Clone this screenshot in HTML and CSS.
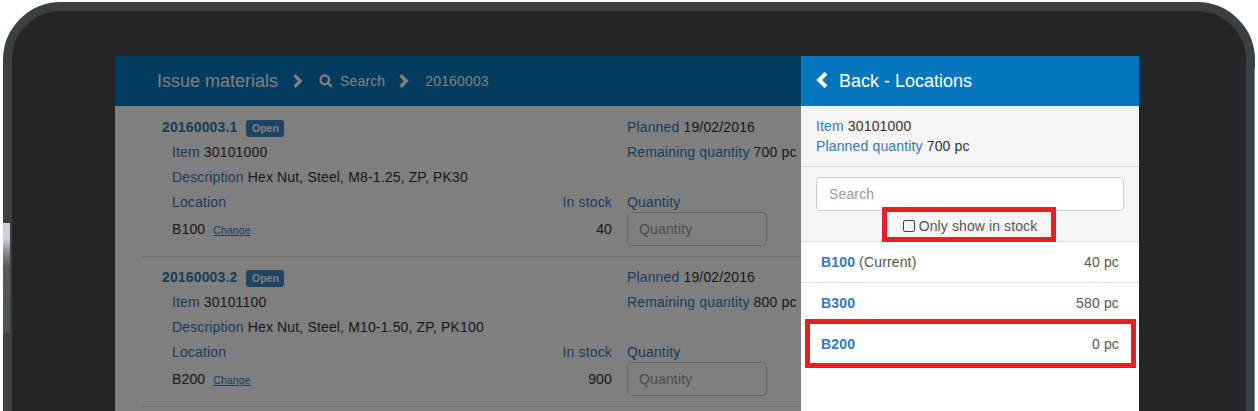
FILE: index.html
```html
<!DOCTYPE html>
<html lang="en">
<head>
<meta charset="utf-8">
<title>Issue materials</title>
<link rel="stylesheet" href="styles.css">
</head>
<body>
<div class="device">
  <span class="glare"></span>
  <span class="edge"></span>
  <div class="bezel">
    <div class="app">
      <main class="main">
        <header class="topbar">
          <span class="crumb-title">Issue materials</span>
          <svg class="chev" viewBox="0 0 10 14"><path d="M1.6 1.2 7.3 7l-5.7 5.8" /></svg>
          <svg class="mag" viewBox="0 0 14 14"><circle cx="5.8" cy="5.8" r="4.3"/><path d="M8.8 8.8 12.8 12.8"/></svg>
          <span class="crumb">Search</span>
          <svg class="chev" viewBox="0 0 10 14"><path d="M1.6 1.2 7.3 7l-5.7 5.8" /></svg>
          <span class="crumb">20160003</span>
        </header>
        <section class="record">
          <div class="col-left">
            <div class="line"><a class="order">20160003.1</a><span class="badge">Open</span></div>
            <div class="line indent"><span class="lbl">Item</span> 30101000</div>
            <div class="line indent"><span class="lbl">Description</span> Hex Nut, Steel, M8-1.25, ZP, PK30</div>
            <div class="line indent split"><span class="lbl">Location</span><span class="lbl">In stock</span></div>
            <div class="line indent split last"><span>B100<a class="change">Change</a></span><span>40</span></div>
          </div>
          <div class="col-right">
            <div class="line"><span class="lbl">Planned</span> 19/02/2016</div>
            <div class="line"><span class="lbl">Remaining quantity</span> 700 pc</div>
            <div class="line"></div>
            <div class="line short"><span class="lbl">Quantity</span></div>
            <input class="qty" placeholder="Quantity">
          </div>
        </section>
        <section class="record">
          <div class="col-left">
            <div class="line"><a class="order">20160003.2</a><span class="badge">Open</span></div>
            <div class="line indent"><span class="lbl">Item</span> 30101100</div>
            <div class="line indent"><span class="lbl">Description</span> Hex Nut, Steel, M10-1.50, ZP, PK100</div>
            <div class="line indent split"><span class="lbl">Location</span><span class="lbl">In stock</span></div>
            <div class="line indent split last"><span>B200<a class="change">Change</a></span><span>900</span></div>
          </div>
          <div class="col-right">
            <div class="line"><span class="lbl">Planned</span> 19/02/2016</div>
            <div class="line"><span class="lbl">Remaining quantity</span> 800 pc</div>
            <div class="line"></div>
            <div class="line short"><span class="lbl">Quantity</span></div>
            <input class="qty" placeholder="Quantity">
          </div>
        </section>
        <section class="record"></section>
        <div class="dim"></div>
      </main>
      <aside class="panel">
        <header class="panel-head">
          <svg class="back" viewBox="0 0 12 16"><path d="M10 1.3 3.2 8l6.8 6.7"/></svg>
          <span>Back - Locations</span>
        </header>
        <div class="info">
          <div><span class="lbl">Item</span> 30101000</div>
          <div><span class="lbl">Planned quantity</span> 700 pc</div>
        </div>
        <div class="filter">
          <input class="search" placeholder="Search">
          <label class="stock"><span class="box"></span>Only show in stock</label>
        </div>
        <ul class="locs">
          <li><span><a class="loc">B100</a> (Current)</span><span>40 pc</span></li>
          <li><a class="loc">B300</a><span>580 pc</span></li>
          <li><a class="loc">B200</a><span>0 pc</span></li>
        </ul>
        <div class="mark mark-stock"></div>
        <div class="mark mark-row"></div>
      </aside>
    </div>
  </div>
</div>
</body>
</html>
```
FILE: styles.css
```css
* { box-sizing: border-box; }
html, body { margin: 0; height: 411px; overflow: hidden; background: #fff; }
body { padding: 2px 3px 0; font: 14px/20px "Liberation Sans", Arial, sans-serif; letter-spacing: .15px; color: #333; }
.device {
  position: relative;
  height: 520px;
  border: 6px solid #3c4040;
  border-radius: 58px;
  background: #3c4040;
}
.glare {
  position: absolute;
  left: -6px;
  top: 215px;
  width: 7px;
  height: 110px;
  background: linear-gradient(#d2d2d2, #cfcfcf 14%, #8a8c8c 26%, #56595a 40%, #4e5150 100%);
}
.edge {
  position: absolute;
  right: -6px;
  top: 60px;
  bottom: 0;
  width: 1px;
  background: #7c7e7e;
}
.bezel {
  height: 100%;
  border: 3px solid #3d3d47;
  border-radius: 52px;
  background: #252525;
  padding: 45px 0 0 103px;
}
.app { display: flex; width: 1024px; height: 500px; background: #fff; }
.main { position: relative; width: 686px; flex: none; }
.dim { position: absolute; inset: 0; background: rgba(0, 0, 0, .5); }
.topbar {
  display: flex;
  align-items: center;
  height: 50px;
  padding-left: 42px;
  background: #0277bd;
  color: #fff;
}
.crumb-title { font-size: 18px; letter-spacing: 0; margin-right: 15px; }
.chev { width: 10px; height: 14px; fill: none; stroke: #fff; stroke-width: 3.4; margin-right: 16px; }
.mag { width: 14px; height: 14px; fill: none; stroke: #fff; stroke-width: 2.4; margin-right: 7px; }
.crumb { margin-right: 14px; }
.record {
  display: flex;
  height: 150px;
  margin-left: 27px;
  padding: 9px 0 0 20px;
}
.record + .record { border-top: 1px solid #ddd; padding-top: 8px; }
.col-left { width: 450px; flex: none; }
.col-right { width: 189px; margin-left: 15px; white-space: nowrap; }
.line { height: 25px; line-height: 25px; white-space: nowrap; }
.line.short { height: 22px; }
.indent { padding-left: 10px; }
.split { display: flex; justify-content: space-between; height: 22px; }
.split.last { height: 34px; line-height: 34px; }
.lbl { color: #337ab7; }
.order { font-weight: 700; color: #337ab7; }
.badge {
  display: inline-block;
  margin-left: 9px;
  padding: 0 5.5px;
  height: 17px;
  line-height: 17px;
  border-radius: 3px;
  background: #3e88c6;
  color: #fff;
  font-size: 10.5px;
  font-weight: 700;
  letter-spacing: 0;
  vertical-align: 0;
}
.change { margin-left: 8px; font-size: 10.5px; color: #337ab7; text-decoration: underline; letter-spacing: .1px; }
.qty, .search {
  display: block;
  height: 34px;
  padding: 6px 12px;
  border: 1px solid #ccc;
  border-radius: 4px;
  background: #fff;
  font: 14px "Liberation Sans", Arial, sans-serif;
  letter-spacing: .15px;
  color: #555;
}
.qty { width: 140px; padding-left: 11px; }
.qty::placeholder, .search::placeholder { color: #999; opacity: 1; }
.panel { position: relative; width: 338px; flex: none; background: #fff; }
.panel-head {
  display: flex;
  align-items: center;
  height: 50px;
  padding-left: 15px;
  background: #0277bd;
  color: #fff;
  font-size: 18px;
  letter-spacing: 0;
}
.back { width: 12px; height: 16px; margin: 0 11px 2px 0; fill: none; stroke: #fff; stroke-width: 4; }
.info { padding: 10px 15px 10px; background: #f5f5f5; border-bottom: 1px solid #ddd; height: 61px; }
.filter {
  height: 75px;
  padding: 10px 15px 0;
  background: #f5f5f5;
  border-bottom: 1px solid #ddd;
}
.search { width: 100%; }
.stock { display: flex; align-items: center; justify-content: center; height: 30px; color: #555; letter-spacing: .1px; }
.box {
  width: 12px;
  height: 12px;
  margin-right: 4px;
  border: 1px solid #444;
  border-radius: 2px;
  background: #f5f5f5;
}
.locs { margin: 0; padding: 0; list-style: none; }
.locs li {
  display: flex;
  justify-content: space-between;
  align-items: center;
  height: 41px;
  padding: 0 20px;
  border-bottom: 1px solid #ddd;
  color: #555;
}
.loc { font-weight: 700; color: #337ab7; }
.mark { position: absolute; border: 5px solid #ed1c24; }
.mark-stock { left: 81px; top: 151px; width: 174px; height: 35px; }
.mark-row { left: 4px; top: 263px; width: 331px; height: 49px; }
```
